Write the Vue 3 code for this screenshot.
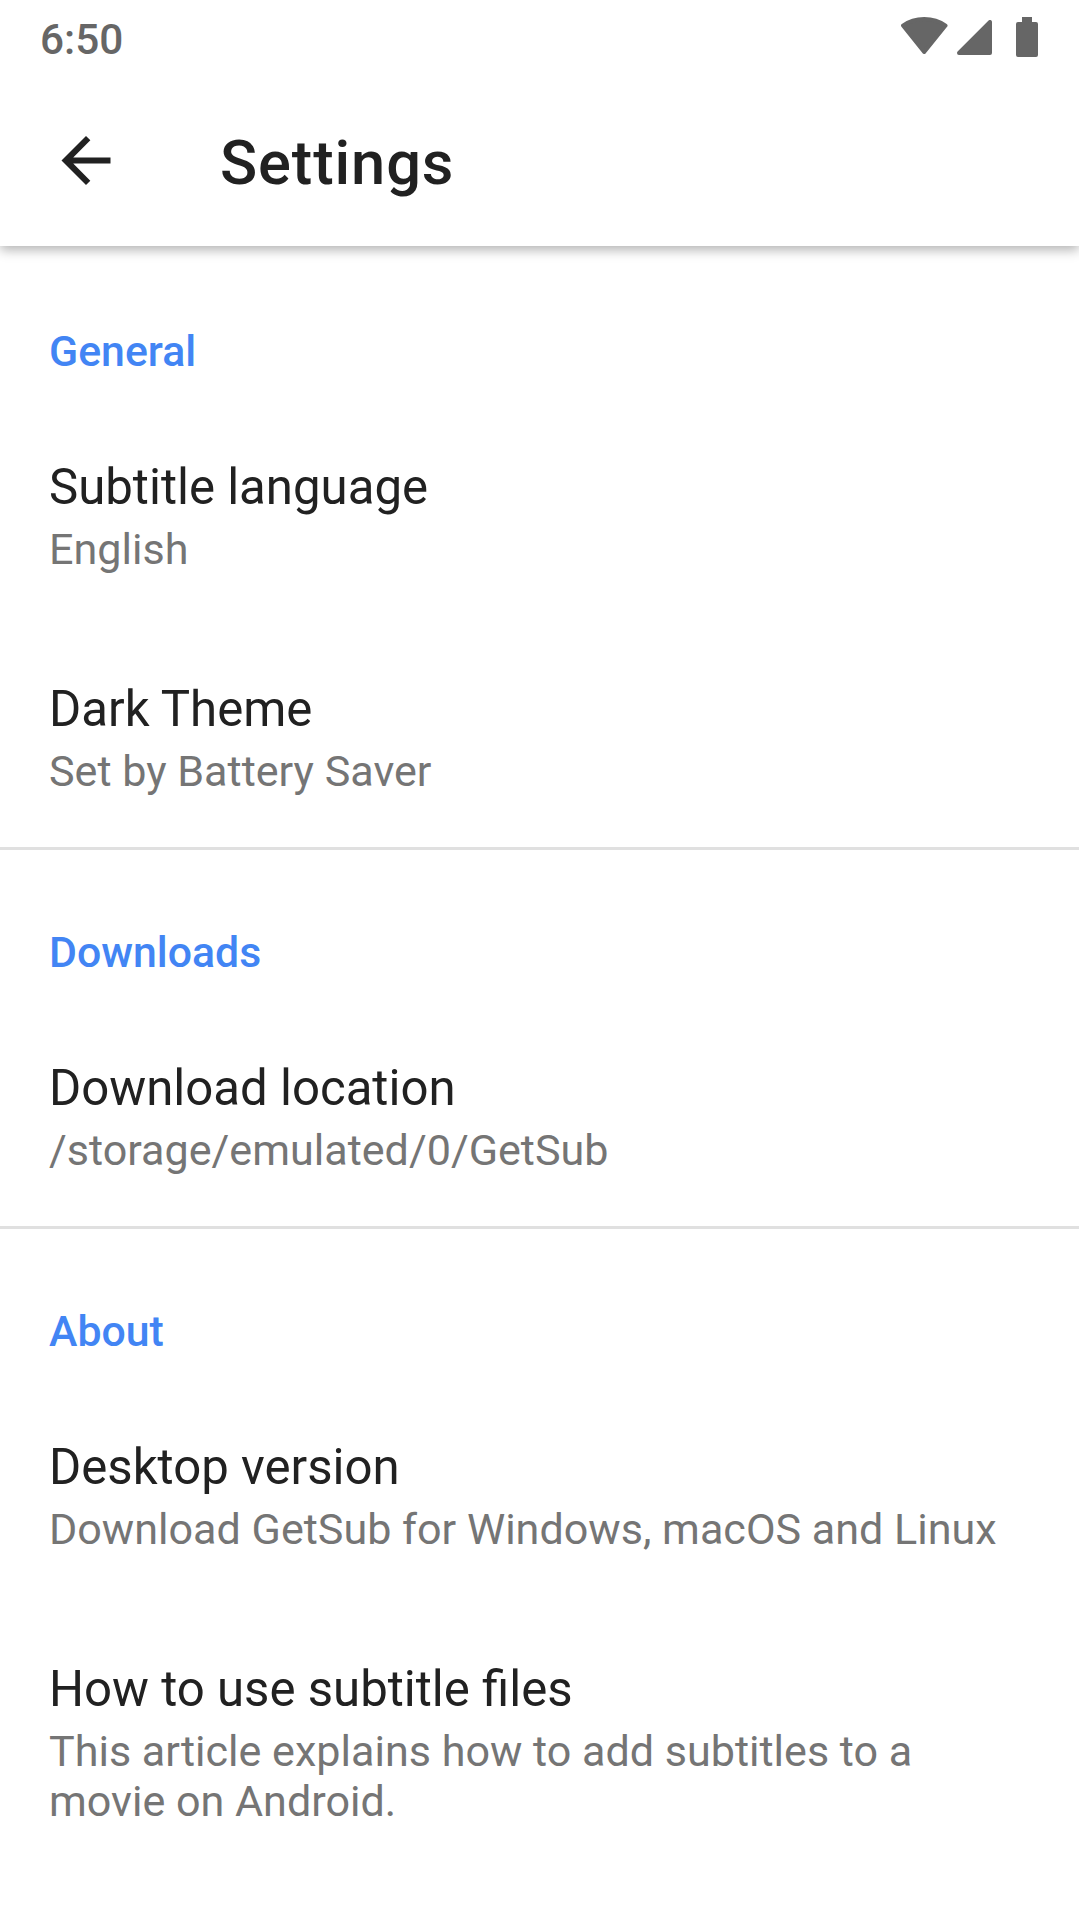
<template>
    <div class="screen">
        <div class="status-bar">
            <span class="time">6:50</span>
            <div class="status-icons">
                <svg class="wifi" viewBox="0 0 47 37"><path d="M23.200 35L2 8.600C8 4.200 15 2 23.200 2S38.500 4.200 44.500 8.600z" /></svg>
                <svg class="signal" viewBox="0 0 35 35"><path d="M2 33L33 2v31z" /></svg>
                <svg class="battery" viewBox="0 0 22 40"><path d="M6 0h10v5h4q2 0 2 2v31q0 2-2 2h-18q-2 0-2-2v-31q0-2 2-2h4z" /></svg>
            </div>
        </div>
        <header class="toolbar">
            <svg class="back" viewBox="4 4 16 16"><path d="M20 11H7.830l5.590-5.590L12 4l-8 8 8 8 1.410-1.410L7.830 13H20v-2z" /></svg>
            <h1>Settings</h1>
        </header>
        <main>
            <section v-for="group in groups" :key="group.title">
                <h2>{{ group.title }}</h2>
                <div v-for="item in group.items" :key="item.label" class="item">
                    <div class="label">{{ item.label }}</div>
                    <div class="summary">{{ item.summary }}</div>
                </div>
            </section>
        </main>
    </div>
</template>
<script setup>
import { ref } from 'vue'
const groups = ref([
    {
        title: "General",
        items: [
            {label: "Subtitle language", summary: "English"},
            {label: "Dark Theme", summary: "Set by Battery Saver"},
        ],
    },
    {
        title: "Downloads",
        items: [
            {label: "Download location", summary: "/storage/emulated/0/GetSub"},
        ],
    },
    {
        title: "About",
        items: [
            {label: "Desktop version", summary: "Download GetSub for Windows, macOS and Linux"},
            {label: "How to use subtitle files", summary: "This article explains how to add subtitles to a movie on Android."},
        ],
    },
])
</script>
<style>
body {
    margin: 0;
    background-color: #fff;
}
</style>
<style scoped>
.screen {
    height: 1922px;
    overflow: hidden;
    background-color: #fff;
    color: #212121;
    font-family: Roboto, sans-serif;

    .status-bar {
        display: flex;
        justify-content: space-between;
        height: 74px;
        padding: 0 41px 0 40px;
        color: #666;

        .time {
            font-size: 42.3px;
            font-weight: 500;
            line-height: 80px;
        }
        .status-icons {
            display: flex;
            align-items: flex-start;
            fill: #666;
            stroke-linejoin: round;
        }
        .wifi {
            width: 47px;
            height: 37px;
            margin-top: 17px;
            stroke: #666;
            stroke-width: 4;
        }
        .signal {
            width: 35px;
            height: 35px;
            margin: 20px 24px 0 9px;
            stroke: #666;
            stroke-width: 4;
        }
        .battery {
            width: 22px;
            height: 40px;
            margin-top: 17px;
        }
    }

    .toolbar {
        display: flex;
        align-items: center;
        height: 172px;
        box-sizing: border-box;
        padding-left: 61px;
        box-shadow: 0 4px 11px rgba(0, 0, 0, 0.3);
        /* only the bottom edge casts a shadow */
        clip-path: inset(0 0 -24px 0);

        .back {
            width: 50px;
            height: 49px;
            fill: #212121;
        }
        h1 {
            margin: 6px 0 0 109px;
            font-size: 61.4px;
            font-weight: 500;
            line-height: 72px;
            letter-spacing: 0.9px;
        }
    }

    section {
        border-top: 3px solid #e0e0e0;
        &:first-child {
            border-top-color: transparent;
        }
        h2 {
            margin: 0;
            padding: 77px 49px 27px;
            color: #4285f4;
            font-size: 42.8px;
            font-weight: 500;
            line-height: 50px;
        }
    }

    .item {
        padding: 55px 49px 50px;
        .label {
            font-size: 49.15px;
            line-height: 58px;
        }
        .summary {
            padding-top: 9px;
            color: #757575;
            font-size: 43.1px;
            line-height: 50px;
        }
    }
}
</style>
